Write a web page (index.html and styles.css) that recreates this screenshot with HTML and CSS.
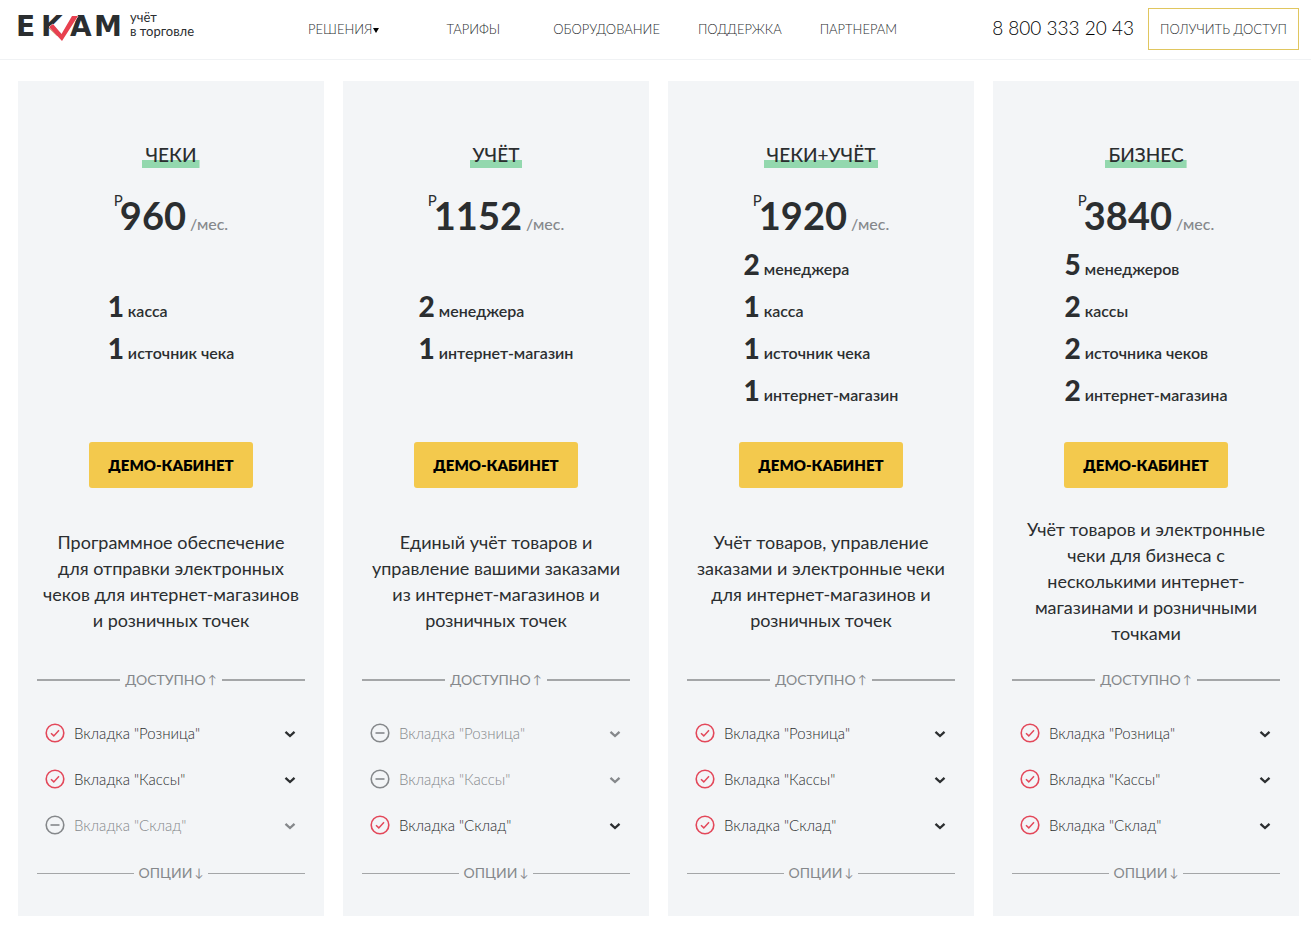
FILE: index.html
```html
<!DOCTYPE html>
<html lang="ru">
<head>
    <meta charset="UTF-8">
    <meta name="viewport" content="width=device-width, initial-scale=1.0">
    <title>ЕКАМ - Тарифы</title>
    <link rel="stylesheet" href="styles.css">
</head>
<body>
    <svg class="sprite" aria-hidden="true">
        <symbol id="check" viewBox="0 0 20 20">
            <circle cx="10" cy="10" r="8.8" fill="none" stroke="currentColor" stroke-width="1.6"/>
            <path d="M6 10.2l2.8 2.7L14 7.2" fill="none" stroke="currentColor" stroke-width="1.5"/>
        </symbol>
        <symbol id="minus" viewBox="0 0 20 20">
            <circle cx="10" cy="10" r="8.8" fill="none" stroke="currentColor" stroke-width="1.6"/>
            <path d="M5.5 10h9" fill="none" stroke="currentColor" stroke-width="1.6"/>
        </symbol>
        <symbol id="arrow" viewBox="0 0 12 8">
            <path d="M1.5 1.8L6 6l4.5-4.2" fill="none" stroke="currentColor" stroke-width="2.3"/>
        </symbol>
    </svg>

    <header class="header">
        <a class="logo" href="#">
            <svg class="logo-img" width="106" height="30" viewBox="0 0 106 30">
                <text class="logo-text" x="-2 23 52 76" y="20">EKAM</text>
                <path d="M31 11l4-3 8.500 10L54 0h6L44 25z" fill="#e8404f" stroke="#fff" stroke-width="1" paint-order="stroke"/>
            </svg>
            <span class="logo-slogan">учёт<br>в торговле</span>
        </a>
        <nav class="nav">
            <a class="nav-link nav-solutions" href="#">РЕШЕНИЯ<span class="caret"></span></a>
            <a class="nav-link nav-tariffs" href="#">ТАРИФЫ</a>
            <a class="nav-link" href="#">ОБОРУДОВАНИЕ</a>
            <a class="nav-link" href="#">ПОДДЕРЖКА</a>
            <a class="nav-link" href="#">ПАРТНЕРАМ</a>
        </nav>
        <a class="phone" href="tel:88003332043">8 800 333 20 43</a>
        <button class="access" type="button">ПОЛУЧИТЬ ДОСТУП</button>
    </header>

    <main class="tariffs">
        <section class="card">
            <h2 class="title">ЧЕКИ</h2>
            <div class="price"><span class="currency">Р</span><b class="sum">960</b> <span class="period">/мес.</span></div>
            <ul class="limits">
                <li><b>1</b> касса</li>
                <li><b>1</b> источник чека</li>
            </ul>
            <button class="demo" type="button">ДЕМО-КАБИНЕТ</button>
            <p class="description">Программное обеспечение для отправки электронных чеков для интернет-магазинов и розничных точек</p>
            <div class="divider divider-bold">ДОСТУПНО <span class="pointer">↑</span></div>
            <ul class="features">
                <li><button class="feature" type="button"><svg class="status"><use href="#check"/></svg>Вкладка "Розница"<svg class="arrow"><use href="#arrow"/></svg></button></li>
                <li><button class="feature" type="button"><svg class="status"><use href="#check"/></svg>Вкладка "Кассы"<svg class="arrow"><use href="#arrow"/></svg></button></li>
                <li><button class="feature off" type="button"><svg class="status"><use href="#minus"/></svg>Вкладка "Склад"<svg class="arrow"><use href="#arrow"/></svg></button></li>
            </ul>
            <div class="divider">ОПЦИИ <span class="pointer">↓</span></div>
        </section>

        <section class="card">
            <h2 class="title">УЧЁТ</h2>
            <div class="price"><span class="currency">Р</span><b class="sum">1152</b> <span class="period">/мес.</span></div>
            <ul class="limits">
                <li><b>2</b> менеджера</li>
                <li><b>1</b> интернет-магазин</li>
            </ul>
            <button class="demo" type="button">ДЕМО-КАБИНЕТ</button>
            <p class="description">Единый учёт товаров и управление вашими заказами из интернет-магазинов и розничных точек</p>
            <div class="divider divider-bold">ДОСТУПНО <span class="pointer">↑</span></div>
            <ul class="features">
                <li><button class="feature off" type="button"><svg class="status"><use href="#minus"/></svg>Вкладка "Розница"<svg class="arrow"><use href="#arrow"/></svg></button></li>
                <li><button class="feature off" type="button"><svg class="status"><use href="#minus"/></svg>Вкладка "Кассы"<svg class="arrow"><use href="#arrow"/></svg></button></li>
                <li><button class="feature" type="button"><svg class="status"><use href="#check"/></svg>Вкладка "Склад"<svg class="arrow"><use href="#arrow"/></svg></button></li>
            </ul>
            <div class="divider">ОПЦИИ <span class="pointer">↓</span></div>
        </section>

        <section class="card">
            <h2 class="title">ЧЕКИ+УЧЁТ</h2>
            <div class="price"><span class="currency">Р</span><b class="sum">1920</b> <span class="period">/мес.</span></div>
            <ul class="limits">
                <li><b>2</b> менеджера</li>
                <li><b>1</b> касса</li>
                <li><b>1</b> источник чека</li>
                <li><b>1</b> интернет-магазин</li>
            </ul>
            <button class="demo" type="button">ДЕМО-КАБИНЕТ</button>
            <p class="description">Учёт товаров, управление заказами и электронные чеки для интернет-магазинов и розничных точек</p>
            <div class="divider divider-bold">ДОСТУПНО <span class="pointer">↑</span></div>
            <ul class="features">
                <li><button class="feature" type="button"><svg class="status"><use href="#check"/></svg>Вкладка "Розница"<svg class="arrow"><use href="#arrow"/></svg></button></li>
                <li><button class="feature" type="button"><svg class="status"><use href="#check"/></svg>Вкладка "Кассы"<svg class="arrow"><use href="#arrow"/></svg></button></li>
                <li><button class="feature" type="button"><svg class="status"><use href="#check"/></svg>Вкладка "Склад"<svg class="arrow"><use href="#arrow"/></svg></button></li>
            </ul>
            <div class="divider">ОПЦИИ <span class="pointer">↓</span></div>
        </section>

        <section class="card">
            <h2 class="title">БИЗНЕС</h2>
            <div class="price"><span class="currency">Р</span><b class="sum">3840</b> <span class="period">/мес.</span></div>
            <ul class="limits">
                <li><b>5</b> менеджеров</li>
                <li><b>2</b> кассы</li>
                <li><b>2</b> источника чеков</li>
                <li><b>2</b> интернет-магазина</li>
            </ul>
            <button class="demo" type="button">ДЕМО-КАБИНЕТ</button>
            <p class="description">Учёт товаров и электронные чеки для бизнеса с несколькими интернет-магазинами и розничными точками</p>
            <div class="divider divider-bold">ДОСТУПНО <span class="pointer">↑</span></div>
            <ul class="features">
                <li><button class="feature" type="button"><svg class="status"><use href="#check"/></svg>Вкладка "Розница"<svg class="arrow"><use href="#arrow"/></svg></button></li>
                <li><button class="feature" type="button"><svg class="status"><use href="#check"/></svg>Вкладка "Кассы"<svg class="arrow"><use href="#arrow"/></svg></button></li>
                <li><button class="feature" type="button"><svg class="status"><use href="#check"/></svg>Вкладка "Склад"<svg class="arrow"><use href="#arrow"/></svg></button></li>
            </ul>
            <div class="divider">ОПЦИИ <span class="pointer">↓</span></div>
        </section>
    </main>
</body>
</html>
```
FILE: styles.css
```css
* {
    box-sizing: border-box;
}
body {
    margin: 0;
    background-color: #fff;
    color: #2b2e30;
    font-family: Lato, "Open Sans", sans-serif;
}
ul {
    list-style: none;
    margin: 0;
    padding: 0;
}
a {
    color: inherit;
    text-decoration: none;
}
button {
    font-family: inherit;
    color: inherit;
    cursor: pointer;
}
.sprite {
    display: none;
}

/* Шапка */
.header {
    display: flex;
    align-items: center;
    height: 60px;
    padding: 0 12px 2px 18px;
    border-bottom: 1px solid #f0f2f4;
}
.logo {
    display: flex;
    align-self: flex-start;
    width: 290px;
    padding-top: 10px;
}
.logo-img {
    margin: 6px 6px 0 0;
    overflow: visible;
}
.logo-text {
    font-family: "DejaVu Sans", sans-serif;
    font-size: 28px;
    font-weight: bold;
    fill: #2b2e30;
}
.logo-slogan {
    font-size: 13px;
    line-height: 14px;
}
.nav {
    display: flex;
    gap: 38px;
    flex: 1;
    font-size: 13px;
    font-weight: 300;
}
.nav-solutions {
    display: flex;
    align-items: center;
    margin-right: 30px;
}
.nav-tariffs {
    margin-right: 15px;
}
.caret {
    margin-top: 3px;
    border: 3px solid transparent;
    border-top: 5px solid #000;
    border-bottom: 0;
}
.phone {
    margin-right: 14px;
    padding-bottom: 2px;
    font-size: 19px;
    font-weight: 300;
    color: #000;
}
.access {
    width: 151px;
    height: 42px;
    padding: 0;
    background: none;
    border: 1px solid #e0c65f;
    font-size: 13px;
    font-weight: 300;
}

/* Тарифы */
.tariffs {
    display: grid;
    grid-template-columns: repeat(4, 1fr);
    gap: 19px;
    padding: 21px 12px 17px 18px;
}
.card {
    display: flex;
    flex-direction: column;
    align-items: center;
    padding: 61px 19px 33px;
    background-color: #f3f5f7;
}
.title {
    margin: 0;
    padding: 0 3px;
    font-size: 19px;
    font-weight: 500;
    line-height: 26px;
    background: linear-gradient(#93d8ae, #93d8ae) bottom / 100% 8px no-repeat;
}
.price {
    height: 48px;
    margin-top: 23px;
    line-height: 48px;
    white-space: nowrap;
}
.currency {
    margin-right: -3px;
    font-size: 15px;
    line-height: 16px;
    vertical-align: 24px;
}
.sum {
    font-size: 38px;
}
.period {
    font-size: 16px;
    font-weight: 500;
    color: #85888b;
}
.limits {
    display: flex;
    flex-direction: column;
    justify-content: center;
    min-height: 168px;
    margin-top: 9px;
    font-size: 16px;
    font-weight: 600;
}
.limits li {
    height: 42px;
    line-height: 42px;
}
.limits b {
    font-size: 28px;
    font-weight: 900;
    line-height: 28px;
}
.demo {
    width: 164px;
    height: 46px;
    margin-top: 26px;
    padding: 0;
    background-color: #f3c94d;
    border: 0;
    border-radius: 3px;
    color: #000;
    font-size: 15px;
    font-weight: 800;
}
.description {
    display: flex;
    align-items: center;
    min-height: 130px;
    margin: 28px 0 0;
    padding: 0 4px;
    font-size: 18px;
    line-height: 26px;
    text-align: center;
}
.divider {
    display: flex;
    align-items: center;
    gap: 5px;
    width: 100%;
    margin-top: 15px;
    font-size: 14px;
    line-height: 20px;
    color: #85888b;
}
.divider::before,
.divider::after {
    content: "";
    flex: 1;
    border-top: 1px solid #a4a6a8;
}
.divider-bold {
    margin-top: 24px;
}
.divider-bold::before,
.divider-bold::after {
    border-top-width: 2px;
}
.pointer {
    margin-left: -3px;
    font-size: 12px;
}
.features {
    width: 100%;
    margin-top: 20px;
}
.feature {
    display: flex;
    align-items: center;
    width: 100%;
    height: 46px;
    padding: 0 9px 0 8px;
    background: none;
    border: 0;
    font-size: 15px;
    font-weight: 300;
}
.status {
    width: 20px;
    height: 20px;
    margin-right: 9px;
    color: #e3485a;
}
.arrow {
    width: 12px;
    height: 8px;
    margin: 2px 0 0 auto;
}
.off,
.off .status {
    color: #85888b;
}
```
